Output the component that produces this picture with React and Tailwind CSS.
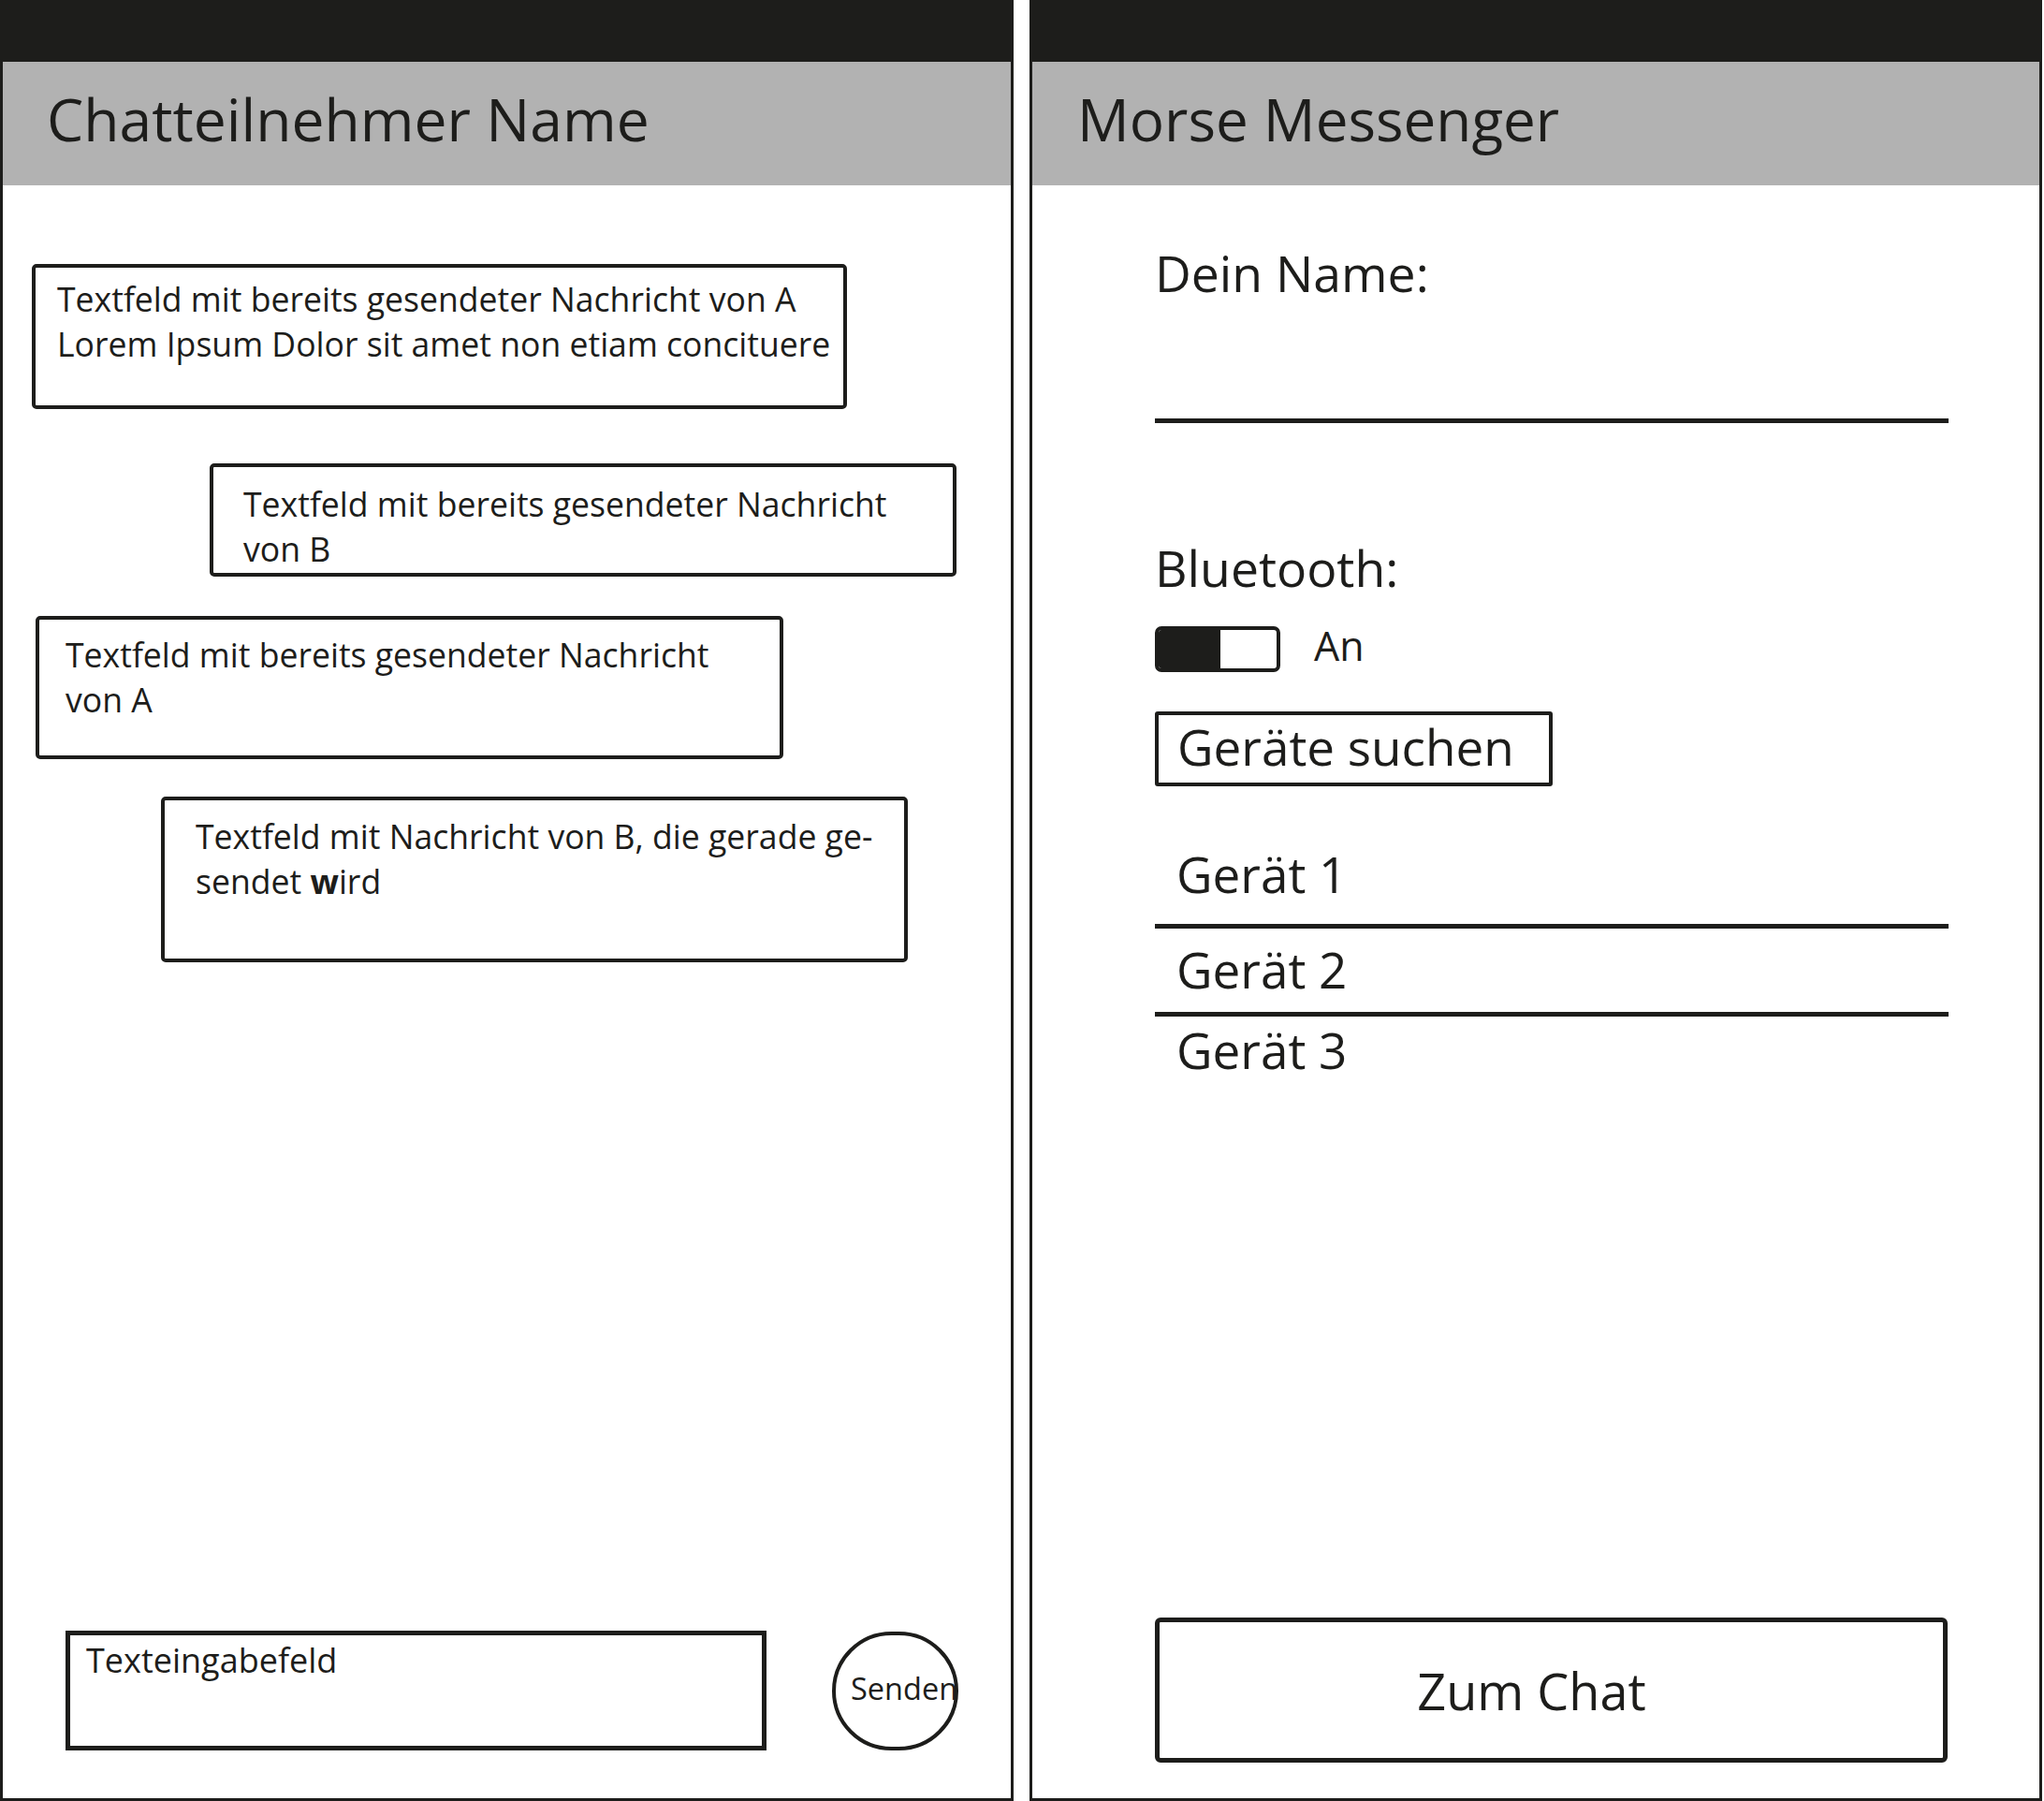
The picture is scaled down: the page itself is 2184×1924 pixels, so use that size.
function Bubble({ className, lines }) {
  return (
    <div
      className={`border-[4px] border-[#1d1d1b] rounded-[5px] text-[35.6px] leading-[48px] text-[#1d1d1b] ${className}`}
    >
      {lines.map((line, i) => (
        <div key={i} className="whitespace-nowrap">
          {line}
        </div>
      ))}
    </div>
  );
}

function ChatScreen() {
  return (
    <div className="w-[1083px] h-full flex flex-col">
      {/* status bar */}
      <div className="h-[66px] bg-[#1d1d1b]" />
      <div className="flex-1 flex flex-col border-x-[3px] border-b-[3px] border-[#1d1d1b]">
        {/* header */}
        <div className="h-[132px] bg-[#b2b2b2] pt-[23px] pl-[47px]">
          <h1 className="text-[62.4px] leading-[76px] text-[#1d1d1b]">
            Chatteilnehmer Name
          </h1>
        </div>

        {/* messages */}
        <Bubble
          className="mt-[84px] ml-[31px] w-[871px] h-[155px] pt-[9px] pl-[23px]"
          lines={[
            "Textfeld mit bereits gesendeter Nachricht von A",
            "Lorem Ipsum Dolor sit amet non etiam concituere",
          ]}
        />
        <Bubble
          className="mt-[58px] ml-[221px] w-[798px] h-[121px] pt-[15px] pl-[32px]"
          lines={["Textfeld mit bereits gesendeter Nachricht", "von B"]}
        />
        <Bubble
          className="mt-[42px] ml-[35px] w-[799px] h-[153px] pt-[13px] pl-[28px]"
          lines={["Textfeld mit bereits gesendeter Nachricht", "von A"]}
        />
        <Bubble
          className="mt-[40px] ml-[169px] w-[798px] h-[177px] pt-[14px] pl-[33px]"
          lines={[
            "Textfeld mit Nachricht von B, die gerade ge-",
            <>
              sendet <span className="font-bold">w</span>ird
            </>,
          ]}
        />

        {/* input row */}
        <div className="mt-auto mb-[51px] ml-[67px] flex items-start gap-[70px]">
          <div className="w-[749px] h-[128px] border-[5px] border-[#1d1d1b] pt-[3px] pl-[17px] text-[36px] leading-[48px] text-[#1d1d1b]">
            Texteingabefeld
          </div>
          <div className="mt-[1px] w-[135px] h-[127px] rounded-full border-[4px] border-[#1d1d1b] flex items-center pl-[16px] pb-[5px] text-[32.5px] leading-[40px] text-[#1d1d1b] whitespace-nowrap">
            Senden
          </div>
        </div>
      </div>
    </div>
  );
}

function SetupScreen() {
  return (
    <div className="w-[1082px] h-full flex flex-col">
      <div className="h-[66px] bg-[#1d1d1b]" />
      <div className="flex-1 flex flex-col border-x-[3px] border-b-[3px] border-[#1d1d1b]">
        <div className="h-[132px] bg-[#b2b2b2] pt-[23px] pl-[48px]">
          <h1 className="text-[62px] leading-[76px] text-[#1d1d1b]">
            Morse Messenger
          </h1>
        </div>

        <div className="flex-1 flex flex-col pl-[131px] text-[#1d1d1b]">
          {/* name */}
          <div className="mt-[62px] text-[53.5px] leading-[64px]">Dein Name:</div>
          <div className="mt-[123px] w-[848px] h-[5px] bg-[#1d1d1b]" />

          {/* bluetooth */}
          <div className="mt-[123px] text-[53.5px] leading-[64px]">Bluetooth:</div>
          <div className="mt-[30px] flex items-start gap-[36px]">
            <div className="w-[134px] h-[49px] rounded-[7px] border-[4px] border-[#1d1d1b] flex overflow-hidden">
              <div className="w-[66px] h-full bg-[#1d1d1b]" />
            </div>
            <div className="-mt-[4px] text-[43px] leading-[49px]">An</div>
          </div>

          <div className="mt-[42px] w-[425px] h-[80px] border-[4px] border-[#1d1d1b] rounded-[3px] pt-[2px] pl-[20px] text-[53px] leading-[64px]">
            Geräte suchen
          </div>

          {/* devices */}
          <div className="mt-[62px] pl-[23px] text-[53px] leading-[64px]">Gerät 1</div>
          <div className="mt-[21px] w-[848px] h-[5px] bg-[#1d1d1b]" />
          <div className="mt-[12px] pl-[23px] text-[53px] leading-[64px]">Gerät 2</div>
          <div className="mt-[13px] w-[848px] h-[5px] bg-[#1d1d1b]" />
          <div className="mt-[4px] pl-[23px] text-[53px] leading-[64px]">Gerät 3</div>

          <div className="mt-auto mb-[38px] w-[847px] h-[155px] border-[5px] border-[#1d1d1b] rounded-[6px] flex items-center justify-center pr-[42px] text-[54px] leading-[64px]">
            Zum Chat
          </div>
        </div>
      </div>
    </div>
  );
}

export default function App() {
  return (
    <div className="w-[2184px] h-[1924px] bg-white flex gap-[17px] font-['Open_Sans',sans-serif]">
      <ChatScreen />
      <SetupScreen />
    </div>
  );
}
